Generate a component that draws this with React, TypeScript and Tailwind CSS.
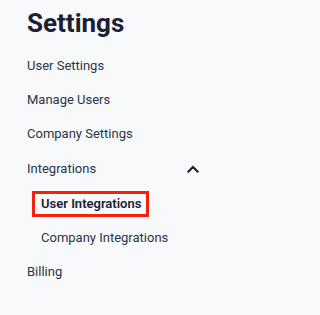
import React from 'react';

const items = ['User Settings', 'Manage Users', 'Company Settings'];

function ChevronUp() {
  return (
    <svg width="12" height="8" viewBox="0 0 12 8" fill="none">
      <path d="M1.5 6.5 6 2l4.5 4.5" stroke="#1b2033" strokeWidth="2.2" strokeLinecap="square" />
    </svg>
  );
}

export default function App() {
  return (
    <div className="min-h-screen w-full bg-[#f8f9fb] font-['Roboto',sans-serif]">
      <div className="w-[215px] pl-[27px] pr-[14px] pt-[7px]">
        <h1 className="text-[26px] leading-[32px] font-bold text-[#1b2033]">Settings</h1>
        <nav className="mt-[10px] flex flex-col text-[13px] text-[#2d3446]">
          {items.map((item) => (
            <div key={item} className="h-[34px] flex items-center">
              {item}
            </div>
          ))}
          <div className="h-[35px] flex items-center justify-between">
            <span>Integrations</span>
            <span className="pr-[2px]">
              <ChevronUp />
            </span>
          </div>
          <div className="h-[35px] flex items-center pl-[5px]">
            <span className="border-[3px] border-[#f4210f] pl-[6px] pr-[5px] h-[26px] flex items-center font-semibold text-[#1b2033]">
              User Integrations
            </span>
          </div>
          <div className="h-[34px] flex items-center pl-[14px]">Company Integrations</div>
          <div className="h-[34px] flex items-center">Billing</div>
        </nav>
      </div>
    </div>
  );
}
